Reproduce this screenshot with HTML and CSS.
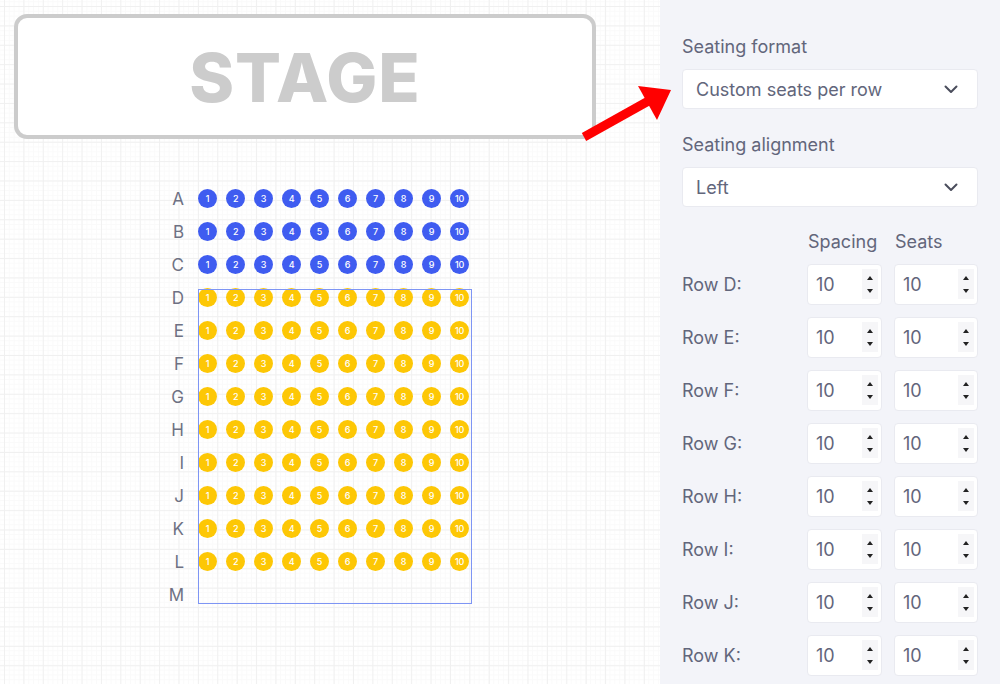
FILE: index.html
```html
<!DOCTYPE html>
<html>
<head>
<meta charset="utf-8">
<link rel="stylesheet" href="styles.css">
</head>
<body>
<div class="app">
  <div class="canvas">
    <div class="stage"><span>STAGE</span></div>
    <div class="seatmap" id="seatmap"></div>
    <div class="selection"></div>
  </div>
  <div class="panel">
    <div class="field-label">Seating format</div>
    <div class="select"><span>Custom seats per row</span><svg class="chev" width="14" height="9" viewBox="0 0 14 9"><path d="M1.5 1.5 L7 7 L12.5 1.5" fill="none" stroke="#4a4d5c" stroke-width="2" stroke-linecap="round" stroke-linejoin="round"/></svg></div>
    <div class="field-label second">Seating alignment</div>
    <div class="select"><span>Left</span><svg class="chev" width="14" height="9" viewBox="0 0 14 9"><path d="M1.5 1.5 L7 7 L12.5 1.5" fill="none" stroke="#4a4d5c" stroke-width="2" stroke-linecap="round" stroke-linejoin="round"/></svg></div>
    <div class="rows" id="rows">
      <div class="hdr-blank"></div>
      <div class="hdr">Spacing</div>
      <div class="hdr">Seats</div>
    </div>
  </div>
  <svg class="arrow" width="110" height="70" viewBox="570 80 110 70">
    <line x1="584" y1="137" x2="652" y2="99" stroke="#ff0000" stroke-width="9"/>
    <polygon points="638,86 671,90 657,120" fill="#ff0000"/>
  </svg>
</div>
<script src="script.js"></script>
</body>
</html>
```

FILE: script.js
```javascript
(function () {
  var map = document.getElementById('seatmap');
  var letters = 'ABCDEFGHIJKLM'.split('');
  letters.forEach(function (l, i) {
    var row = document.createElement('div');
    row.className = 'srow';
    var lab = document.createElement('div');
    lab.className = 'slabel';
    lab.textContent = l;
    row.appendChild(lab);
    var seats = document.createElement('div');
    seats.className = 'seats';
    if (l !== 'M') {
      for (var n = 1; n <= 10; n++) {
        var s = document.createElement('div');
        s.className = 'seat ' + (i < 3 ? 'blue' : 'yellow');
        s.textContent = n;
        seats.appendChild(s);
      }
    }
    row.appendChild(seats);
    map.appendChild(row);
  });

  var rows = document.getElementById('rows');
  'DEFGHIJK'.split('').forEach(function (l) {
    var lab = document.createElement('div');
    lab.className = 'rlabel';
    lab.textContent = 'Row ' + l + ':';
    rows.appendChild(lab);
    for (var k = 0; k < 2; k++) {
      var inp = document.createElement('div');
      inp.className = 'num';
      inp.innerHTML = '<span>10</span><div class="spin"><i class="up"></i><i class="down"></i></div>';
      rows.appendChild(inp);
    }
  });
})();
```

FILE: styles.css
```css
* { box-sizing: border-box; }
html, body { margin: 0; padding: 0; }
body {
  width: 1000px;
  height: 684px;
  overflow: hidden;
  font-family: Inter, "Open Sans", sans-serif;
  background: #fff;
}
.app {
  display: flex;
  width: 1000px;
  height: 684px;
  position: relative;
}
.canvas {
  width: 660px;
  height: 684px;
  position: relative;
  padding: 14px 0 0 14px;
  background-color: #fff;
  background-image:
    linear-gradient(to right, #f0f0f0 1px, transparent 1px),
    linear-gradient(to bottom, #f0f0f0 1px, transparent 1px),
    linear-gradient(to right, #fafafa 1px, transparent 1px),
    linear-gradient(to bottom, #fafafa 1px, transparent 1px);
  background-size: 19.4px 19.4px, 19.4px 19.4px, 4.85px 4.85px, 4.85px 4.85px;
  background-position: 4px 0, 0 6px, 4px 0, 0 6px;
}
.stage {
  width: 582px;
  height: 125px;
  border: 4px solid #cccccc;
  border-radius: 13px;
  background: #fff;
  display: flex;
  align-items: center;
  justify-content: center;
}
.stage span {
  font-family: Inter, sans-serif;
  font-weight: 800;
  font-size: 68px;
  color: #cccccc;
  letter-spacing: 1px;
}
.seatmap {
  margin-top: 43px;
  margin-left: 150px;
  display: flex;
  flex-direction: column;
}
.srow {
  display: flex;
  align-items: center;
  height: 33px;
}
.slabel {
  width: 20px;
  text-align: right;
  font-size: 17px;
  color: #6e7183;
  margin-right: 14px;
}
.seats {
  display: flex;
  gap: 9px;
}
.seat {
  width: 19px;
  height: 19px;
  border-radius: 50%;
  color: #fff;
  font-size: 9px;
  font-weight: 500;
  display: flex;
  align-items: center;
  justify-content: center;
  letter-spacing: -0.3px;
}
.seat.blue { background: #3f5cf0; }
.seat.yellow { background: #fdc705; }
.selection {
  position: absolute;
  left: 198px;
  top: 289px;
  width: 274px;
  height: 315px;
  border: 1px solid #7e95f4;
  pointer-events: none;
}
.panel {
  width: 340px;
  height: 684px;
  background: #f3f4f9;
  padding: 36px 22px 0 22px;
  color: #62667b;
}
.field-label {
  font-size: 18px;
  line-height: 22px;
  color: #62667b;
}
.field-label.second { margin-top: 25px; }
.select {
  margin-top: 11px;
  height: 40px;
  background: #fff;
  border: 1px solid #e9eaf0;
  border-radius: 4px;
  display: flex;
  align-items: center;
  justify-content: space-between;
  padding: 0 19px 0 13px;
  font-size: 18px;
  color: #62667b;
}
.chev { display: block; }
.rows {
  margin-top: 24px;
  display: grid;
  grid-template-columns: 113px 75px 84px;
  column-gap: 12px;
  row-gap: 12px;
  align-items: center;
}
.rows .hdr { font-size: 18px; line-height: 22px; padding-left: 1px; margin-bottom: -1px; }
.rlabel { font-size: 18px; color: #62667b; }
.num {
  height: 41px;
  background: #fff;
  border: 1px solid #e9eaf0;
  border-radius: 4px;
  display: flex;
  align-items: center;
  justify-content: space-between;
  padding: 0 3px 0 8px;
  font-size: 18px;
  color: #62667b;
}
.spin {
  width: 16px;
  height: 30px;
  background: #f6f6f8;
  display: flex;
  flex-direction: column;
  align-items: center;
  justify-content: space-between;
  padding: 7px 0 6px;
  margin-top: -2px;
}
.spin i {
  display: block;
  width: 0;
  height: 0;
  border-left: 3px solid transparent;
  border-right: 3px solid transparent;
}
.spin .up { border-bottom: 4px solid #222; }
.spin .down { border-top: 4px solid #222; }
.arrow {
  position: absolute;
  left: 570px;
  top: 80px;
  overflow: visible;
}
```
